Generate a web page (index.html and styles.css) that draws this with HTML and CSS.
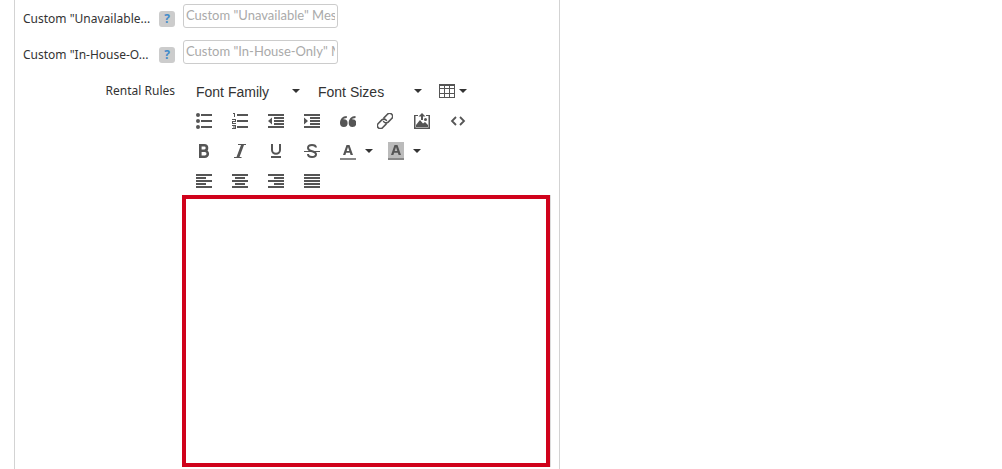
FILE: index.html
```html
<!DOCTYPE html>
<html lang="en">
<head>
<meta charset="utf-8">
<meta name="viewport" content="width=device-width, initial-scale=1">
<title>Rental Rules</title>
<link rel="stylesheet" href="styles.css">
</head>
<body>
<svg class="defs" aria-hidden="true">
  <symbol id="caret" viewBox="0 0 8 4"><path d="M0 0h8L4 4z"/></symbol>
</svg>
<main class="panel">
  <form class="form">
    <div class="row">
      <div class="label-cell">
        <label class="label" for="unavailable">Custom "Unavailable...</label>
        <button class="help" type="button" aria-label="Help">?</button>
      </div>
      <input class="field" id="unavailable" type="text" placeholder='Custom "Unavailable" Message'>
    </div>
    <div class="row">
      <div class="label-cell">
        <label class="label" for="inhouse">Custom "In-House-O...</label>
        <button class="help" type="button" aria-label="Help">?</button>
      </div>
      <input class="field" id="inhouse" type="text" placeholder='Custom "In-House-Only" Message'>
    </div>
    <div class="row">
      <div class="label-cell label-cell-end">
        <label class="label" for="rules">Rental Rules</label>
      </div>
      <div class="editor">
        <div class="toolbar">
          <div class="tools">
            <span class="picker">
              <select class="picker-select" aria-label="Font Family"><option>Font Family</option></select>
              <svg class="caret"><use href="#caret"/></svg>
            </span>
            <span class="picker">
              <select class="picker-select" aria-label="Font Sizes"><option>Font Sizes</option></select>
              <svg class="caret"><use href="#caret"/></svg>
            </span>
            <button class="tool tool-table" type="button" aria-label="Table">
              <svg class="icon" viewBox="0 0 16 16"><path fill-rule="evenodd" d="M0 1h16v14H0zM1 3v2h4V3zM6 3v2h4V3zM11 3v2h4V3zM1 6v4h4V6zM6 6v4h4V6zM11 6v4h4V6zM1 11v3h4v-3zM6 11v3h4v-3zM11 11v3h4v-3z"/></svg>
              <svg class="caret"><use href="#caret"/></svg>
            </button>
          </div>
          <div class="tools">
            <button class="tool" type="button" aria-label="Bullet list">
              <svg class="icon" viewBox="0 0 16 16"><circle cx="2" cy="2" r="2"/><circle cx="2" cy="8" r="2"/><circle cx="2" cy="14" r="2"/><path d="M5 1h11v2H5zM5 7h11v2H5zM5 13h11v2H5z"/></svg>
            </button>
            <button class="tool" type="button" aria-label="Numbered list">
              <svg class="icon" viewBox="0 0 16 16"><path d="M5 1h11v2H5zM5 7h11v2H5zM5 13h11v2H5zM1 0h2v4H2V1H1zM0 6h4v3H1v1h3v1H0V8h3V7H0zM0 12h4v4H0v-1h3v-.5H1v-1h2V13H0z"/></svg>
            </button>
            <button class="tool" type="button" aria-label="Decrease indent">
              <svg class="icon" viewBox="0 0 16 16"><path d="M0 1h16v2H0zM6 4h10v2H6zM6 7h10v2H6zM6 10h10v2H6zM0 13h16v2H0zM4 4.500v7L0 8z"/></svg>
            </button>
            <button class="tool" type="button" aria-label="Increase indent">
              <svg class="icon" viewBox="0 0 16 16"><path d="M0 1h16v2H0zM6 4h10v2H6zM6 7h10v2H6zM6 10h10v2H6zM0 13h16v2H0zM0 4.500v7L4 8z"/></svg>
            </button>
            <button class="tool" type="button" aria-label="Blockquote">
              <svg class="icon" viewBox="0 0 16 16"><path d="M3.700 6.300a3.800 3.800 0 1 1-3.700 3.900C0 6 2.500 3.200 6.800 3v2C4.700 5.200 3.700 5.700 3.200 6.300zM12.400 6.300a3.800 3.800 0 1 1-3.700 3.900c0-4.200 2.500-7 6.800-7.200v2c-2.100.2-3.100.7-3.600 1.300z"/></svg>
            </button>
            <button class="tool tool-link" type="button" aria-label="Link">
              <svg class="icon" viewBox="0 0 16 16"><g fill="none" stroke="currentColor" stroke-width="1.600" stroke-linecap="round" transform="rotate(-45 8 8)"><path d="M6.500 11H1.500A3 3 0 0 1 1.500 5h5a3 3 0 0 1 2.900 3.500M9.500 5h5a3 3 0 0 1 0 6h-5a3 3 0 0 1-2.900-3.500"/></g></svg>
            </button>
            <button class="tool" type="button" aria-label="Insert image">
              <svg class="icon" viewBox="0 0 16 16"><path d="M0 2h4v1H1.500v11.500h13V3H12V2h4v14H0zM8 0l3.500 3.500H9V7H7V3.500H4.500zM2 14v-2l4-5 3 3.500 2-1.500 3 3v2z"/><circle cx="11.500" cy="6.500" r="1.500"/></svg>
            </button>
            <button class="tool" type="button" aria-label="Source code">
              <svg class="icon" viewBox="0 0 16 16"><path fill="none" stroke="currentColor" stroke-width="1.800" d="M6 4L2 8l4 4M10 4l4 4-4 4"/></svg>
            </button>
          </div>
          <div class="tools">
            <button class="tool" type="button" aria-label="Bold">
              <svg class="icon" viewBox="0 0 16 16"><path fill="none" stroke="currentColor" stroke-width="2.600" d="M4.300 2.300h4a2.600 2.600 0 0 1 0 5.400h-4M4.300 7.700h4.500a3 3 0 0 1 0 6H4.300zM4.300 1v14"/></svg>
            </button>
            <button class="tool" type="button" aria-label="Italic">
              <svg class="icon" viewBox="0 0 16 16"><path d="M6 1h8v1h-2L7.500 14h2v1H2v-1h2.500L9 2H6z"/></svg>
            </button>
            <button class="tool" type="button" aria-label="Underline">
              <svg class="icon" viewBox="0 0 16 16"><path d="M3 13h10v2H3z"/><path fill="none" stroke="currentColor" stroke-width="2" d="M4 1v6a4 3.800 0 0 0 8 0V1"/></svg>
            </button>
            <button class="tool" type="button" aria-label="Strikethrough">
              <svg class="icon" viewBox="0 0 16 16"><path d="M0 8h16v1H0z"/><path fill="none" stroke="currentColor" stroke-width="2" d="M12 4.500C11.800 2.700 10.200 2 8 2S4 3 4 4.900c0 2 1.800 2.600 4 3.300s4 1.200 4 3-1.800 2.800-4 2.800-4-1-4-2.900"/></svg>
            </button>
            <button class="tool tool-color" type="button" aria-label="Text color">
              <svg class="icon icon-tall" viewBox="0 0 16 18"><path fill="#888" d="M0 16h16v2H0z"/><path fill-rule="evenodd" d="M6.500 3h3L13 13h-2.400l-.7-2.200H6.100L5.400 13H3zM8 5L6.700 9h2.600z"/></svg>
              <svg class="caret"><use href="#caret"/></svg>
            </button>
            <button class="tool tool-color" type="button" aria-label="Background color">
              <svg class="icon icon-tall" viewBox="0 0 16 18"><path fill="#bbb" d="M0 0h16v16H0z"/><path fill="#888" d="M0 16h16v2H0z"/><path fill-rule="evenodd" d="M6.500 3h3L13 13h-2.400l-.7-2.200H6.100L5.400 13H3zM8 5L6.700 9h2.600z"/></svg>
              <svg class="caret"><use href="#caret"/></svg>
            </button>
          </div>
          <div class="tools">
            <button class="tool" type="button" aria-label="Align left">
              <svg class="icon" viewBox="0 0 16 16"><path d="M0 1h16v2H0zM0 4h10v2H0zM0 7h16v2H0zM0 10h10v2H0zM0 13h16v2H0z"/></svg>
            </button>
            <button class="tool" type="button" aria-label="Align center">
              <svg class="icon" viewBox="0 0 16 16"><path d="M0 1h16v2H0zM3 4h10v2H3zM0 7h16v2H0zM3 10h10v2H3zM0 13h16v2H0z"/></svg>
            </button>
            <button class="tool" type="button" aria-label="Align right">
              <svg class="icon" viewBox="0 0 16 16"><path d="M0 1h16v2H0zM6 4h10v2H6zM0 7h16v2H0zM6 10h10v2H6zM0 13h16v2H0z"/></svg>
            </button>
            <button class="tool" type="button" aria-label="Justify">
              <svg class="icon" viewBox="0 0 16 16"><path d="M0 1h16v2H0zM0 4h16v2H0zM0 7h16v2H0zM0 10h16v2H0zM0 13h16v2H0z"/></svg>
            </button>
          </div>
        </div>
        <textarea class="content" id="rules"></textarea>
      </div>
    </div>
  </form>
</main>
</body>
</html>
```

FILE: styles.css
```css
* {
  box-sizing: border-box;
}

body {
  margin: 0;
  background: #fff;
  color: #333;
  font-family: "Noto Sans", "Open Sans", sans-serif;
}

.defs {
  display: none;
}

.panel {
  max-width: 546px;
  min-height: 100vh;
  margin-left: 14px;
  padding: 4px 9px 0 8px;
  border: solid #d3d3d3;
  border-width: 0 1px;
}

.form {
  display: flex;
  flex-direction: column;
  gap: 12px;
}

.row {
  display: flex;
  align-items: flex-start;
  gap: 7px;
}

.label-cell {
  display: flex;
  flex: 0 0 152px;
  align-items: center;
  justify-content: space-between;
  padding-top: 6px;
}

.label-cell-end {
  justify-content: flex-end;
}

.label {
  font-size: 12px;
  line-height: 18px;
  white-space: nowrap;
}

.help {
  width: 16px;
  height: 16px;
  padding: 0;
  border: 0;
  border-radius: 3px;
  background: #ccc;
  color: #428bca;
  font: 700 12px/16px "Open Sans", sans-serif;
}

.field {
  width: 155px;
  height: 24px;
  margin-left: 1px;
  padding: 0 2px 2px;
  border: 1px solid #ccc;
  border-radius: 3px;
  background: #fff;
  color: #333;
  font: 13px Lato, sans-serif;
}

.field::placeholder {
  color: #aaa;
}

.editor {
  flex: 1;
  min-width: 0;
}

.toolbar {
  padding-left: 4px;
}

.tools {
  display: flex;
  flex-wrap: wrap;
}

.picker {
  display: grid;
  align-items: center;
  width: 122px;
  height: 30px;
}

.picker-select,
.picker .caret {
  grid-area: 1 / 1;
}

.picker-select {
  width: 100%;
  height: 30px;
  padding: 2px 20px 0 10px;
  border: 0;
  background: transparent;
  appearance: none;
  color: #333;
  font: 14px "Liberation Sans", Arial, sans-serif;
}

.picker .caret {
  justify-self: end;
  margin-right: 8px;
  pointer-events: none;
}

.caret {
  width: 8px;
  height: 4px;
  fill: #333;
}

.tool {
  display: flex;
  align-items: center;
  justify-content: center;
  width: 36px;
  height: 30px;
  padding: 0;
  border: 0;
  background: transparent;
  color: #555;
}

.tool-table {
  gap: 4px;
  width: 46px;
}

.tool-color {
  justify-content: flex-start;
  gap: 9px;
  width: 48px;
  padding-left: 10px;
}

.tool-link {
  width: 38px;
}

.icon {
  width: 16px;
  height: 16px;
  fill: currentColor;
}

.icon-tall {
  height: 18px;
}

.content {
  display: block;
  width: 100%;
  height: 272px;
  margin-top: -1px;
  padding: 8px;
  border: 4px solid #d0021b;
  outline: 0;
  background: #fff;
  box-shadow: 1px 0 #ddd;
  color: #333;
  font: 14px "Liberation Sans", Arial, sans-serif;
  resize: none;
}
```
